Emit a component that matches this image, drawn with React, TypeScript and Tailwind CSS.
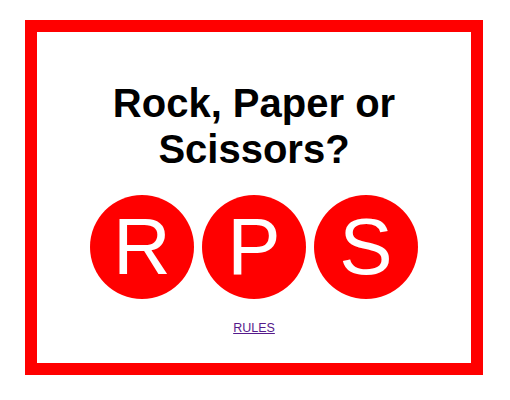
import React from "react";

export default function App() {
  const letters = ["R", "P", "S"];
  return (
    <div className="w-[510px] h-[400px] bg-white pt-[20px] pl-[25px]" style={{ fontFamily: '"Liberation Sans", Arial, sans-serif' }}>
      <div className="w-[458px] h-[355px] border-[12px] border-[#ff0000] flex flex-col items-center">
        <h1 className="mt-[48px] text-center text-[40px] leading-[46px] font-bold text-black w-[300px]">
          Rock, Paper or Scissors?
        </h1>
        <div className="mt-[23px] flex gap-[8px]">
          {letters.map((l) => (
            <div
              key={l}
              className="w-[104px] h-[104px] rounded-full bg-[#ff0000] flex items-center justify-center text-white text-[80px] leading-none"
            >
              {l}
            </div>
          ))}
        </div>
        <a href="#" className="mt-[22px] text-[12.5px] leading-[15px] text-[#551a8b] underline">
          RULES
        </a>
      </div>
    </div>
  );
}
